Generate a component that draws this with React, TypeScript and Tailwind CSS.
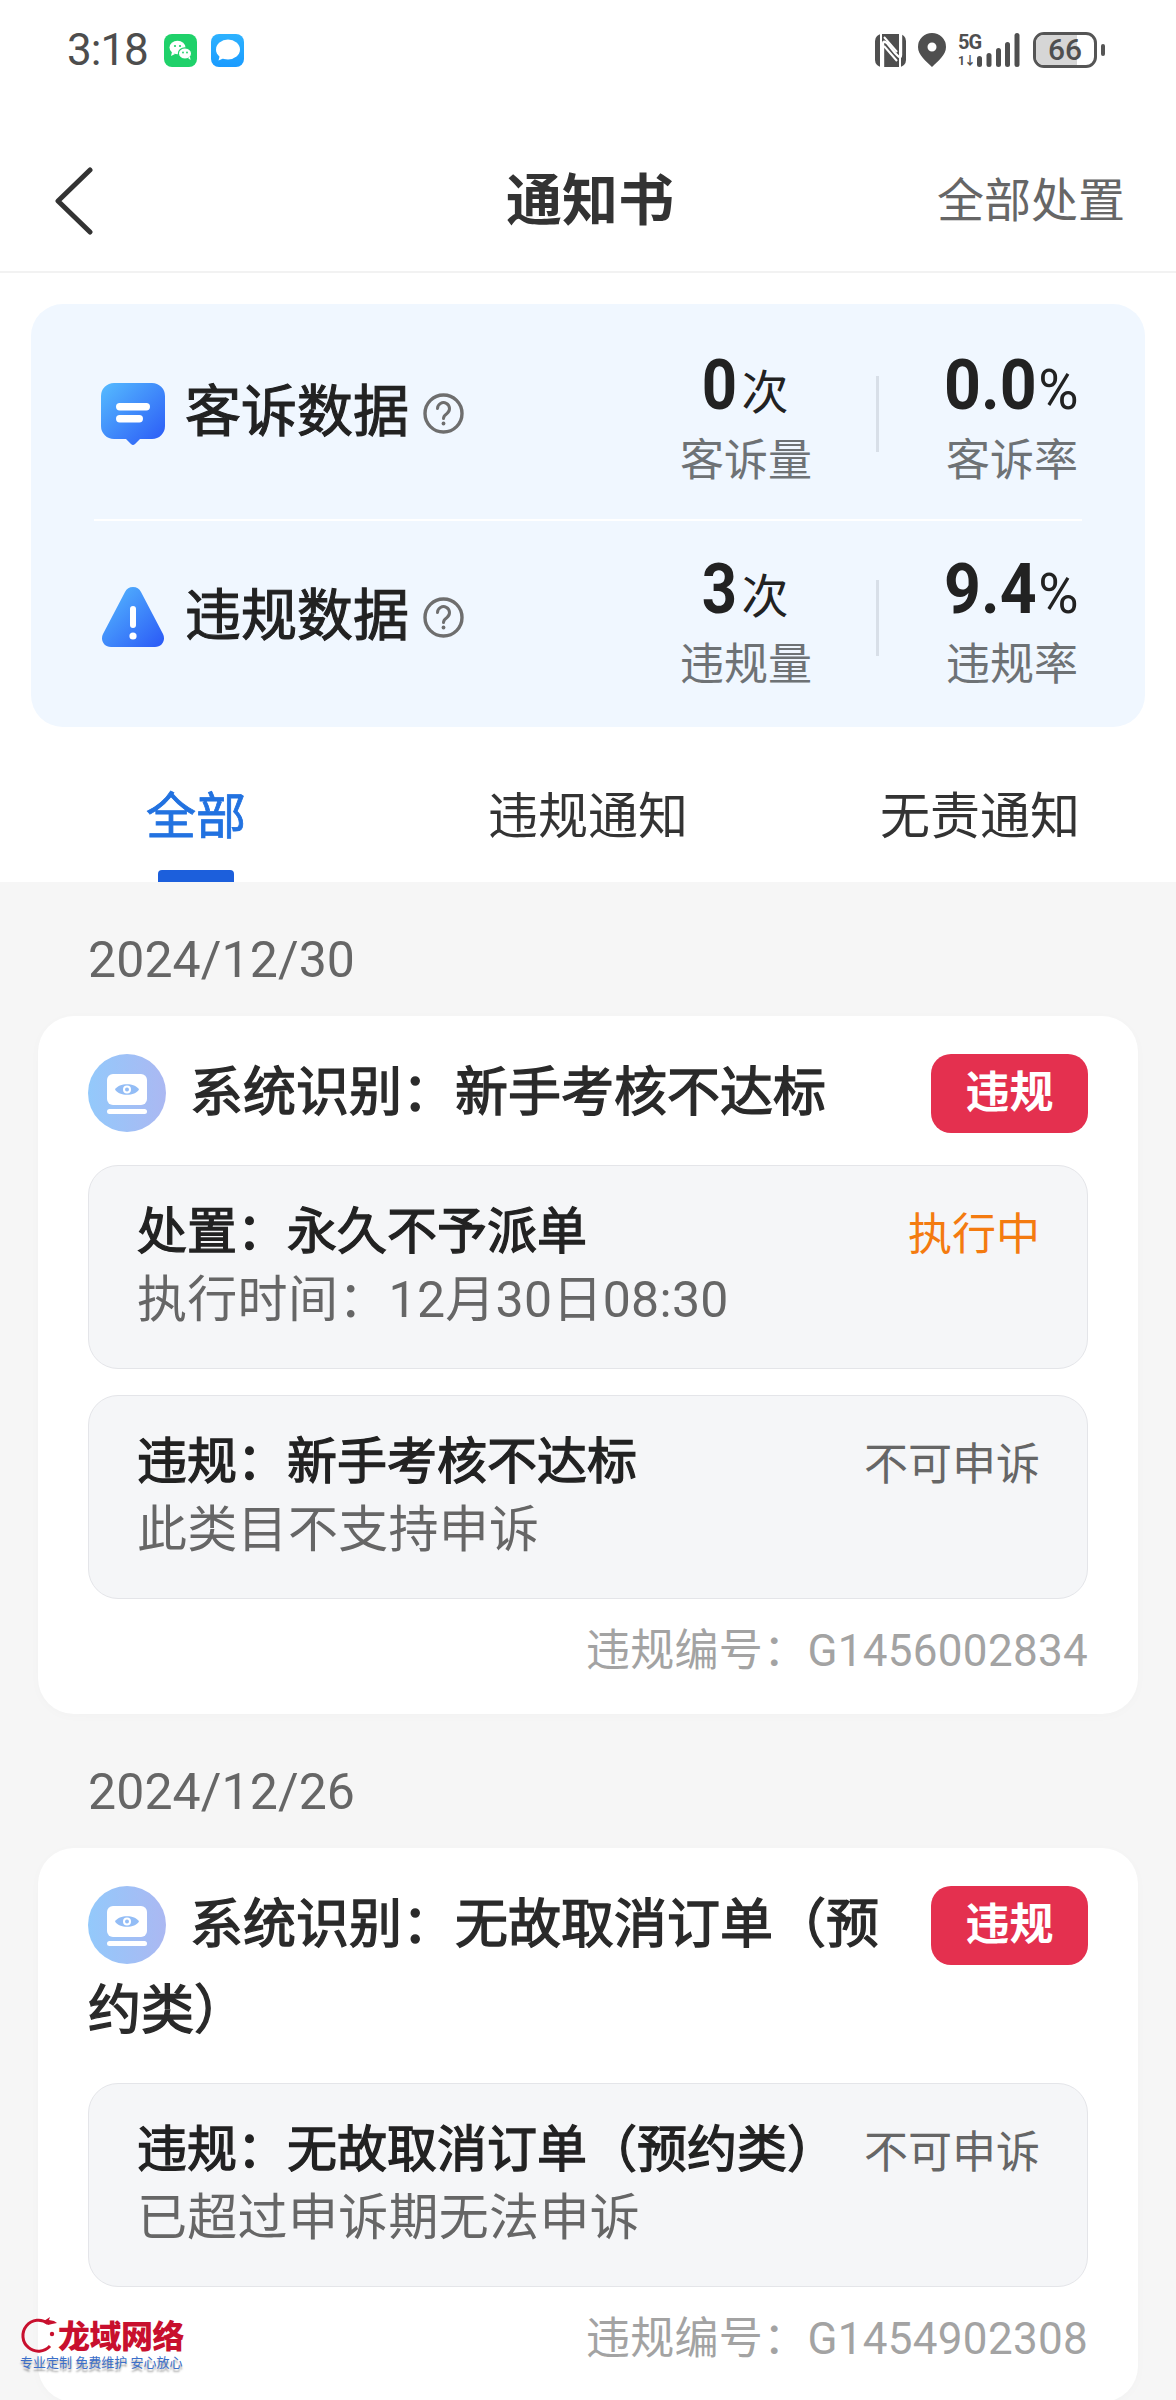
import React from "react";

const sans = "font-['Roboto','Noto_Sans_CJK_SC',sans-serif]";

function StatusBar() {
  return (
    <div className="h-[130px] flex justify-between items-start pt-[31px] pl-[67px] pr-[71px]">
      <div className="flex items-center h-[38px]">
        <span className="text-[44px] leading-[38px] text-[#4d4d4d] w-[97px] inline-block tracking-[-1px]">3:18</span>
        <svg width="33" height="33" viewBox="0 0 33 33">
          <rect width="33" height="33" rx="8" fill="#1fd16a" />
          <ellipse cx="13.5" cy="13.5" rx="8" ry="6.8" fill="#fff" />
          <path d="M8 18l-1 4 4-2z" fill="#fff" />
          <ellipse cx="21" cy="19.5" rx="6.6" ry="5.6" fill="#fff" stroke="#1fd16a" strokeWidth="1.2" />
          <path d="M24 24l2.5 2-.5-3.5z" fill="#fff" />
          <circle cx="11" cy="12" r="1.1" fill="#1fd16a" />
          <circle cx="16" cy="12" r="1.1" fill="#1fd16a" />
          <circle cx="19" cy="18.5" r=".9" fill="#1fd16a" />
          <circle cx="23" cy="18.5" r=".9" fill="#1fd16a" />
        </svg>
        <svg className="ml-[14px]" width="33" height="33" viewBox="0 0 33 33">
          <defs>
            <linearGradient id="msg" x1="0" y1="0" x2="0" y2="1">
              <stop offset="0" stopColor="#2db2ff" />
              <stop offset="1" stopColor="#1a9bff" />
            </linearGradient>
          </defs>
          <rect width="33" height="33" rx="8" fill="url(#msg)" />
          <ellipse cx="17" cy="15.5" rx="12" ry="10" fill="#fff" />
          <path d="M9 21l-1.5 5.5 7-3z" fill="#fff" />
        </svg>
      </div>
      <div className="flex items-center h-[38px] text-[#4f4f4f]">
        <svg width="31" height="33" viewBox="0 0 31 33">
          <rect x="0" y="0" width="31" height="33" rx="7" fill="#4f4f4f" />
          <path d="M8 33V10q0-4 4-1l8 10 3 3q3 3 3-1V0" fill="none" stroke="#fff" strokeWidth="2.400" />
          <path d="M9 3l13 15M9 12l13 15" fill="none" stroke="#fff" strokeWidth="2" />
          <path d="M6 0v33M25 0v33" stroke="#fff" strokeWidth="2" />
        </svg>
        <svg className="ml-[12px]" width="28" height="34" viewBox="0 0 28 34">
          <path fillRule="evenodd" fill="#4f4f4f" d="M14 0a14 14 0 0 1 14 14c0 8-8 14-14 20C8 28 0 22 0 14A14 14 0 0 1 14 0zm0 9.5a4.5 4.5 0 1 0 0 9 4.5 4.5 0 0 0 0-9z" />
        </svg>
        <div className="relative ml-[12px] w-[62px] h-[34px]">
          <span className="absolute left-0 top-[0px] text-[20px] leading-[18px] font-bold tracking-[-1px]">5G</span>
          <span className="absolute left-0 top-[23px] text-[12px] leading-[11px] font-bold tracking-[-1px]">1↓</span>
          <svg className="absolute left-[19px] top-0" width="43" height="34" viewBox="0 0 43 34">
            <rect x="0" y="23" width="5" height="11" rx="2.5" fill="#4f4f4f" />
            <rect x="9.5" y="20" width="5" height="14" rx="2.5" fill="#4f4f4f" />
            <rect x="19" y="15" width="5" height="19" rx="2.5" fill="#4f4f4f" />
            <rect x="28" y="9" width="5" height="25" rx="2.5" fill="#4f4f4f" />
            <rect x="37.5" y="0" width="5" height="34" rx="2.5" fill="#4f4f4f" />
          </svg>
        </div>
        <div className="relative ml-[13px] w-[64px] h-[36px] rounded-[11px] border-[3px] border-[#555] flex items-center justify-center">
          <div className="absolute left-0 top-0 bottom-0 w-[41px] rounded-l-[8px] bg-[#d6d6d6]" />
          <span className="relative text-[30px] leading-[30px] text-[#4f4f4f] font-medium">66</span>
        </div>
        <div className="ml-[4px] w-[4px] h-[12px] rounded-full bg-[#555]" />
      </div>
    </div>
  );
}

function Header() {
  return (
    <div className="h-[143px] grid grid-cols-[1fr_auto_1fr] items-center pl-[55px] pr-[51px] border-b-2 border-[#f2f2f2]">
      <svg width="38" height="68" viewBox="0 0 38 68">
        <polyline points="35,3 3,34 35,65" fill="none" stroke="#333" strokeWidth="5" strokeLinecap="round" strokeLinejoin="round" />
      </svg>
      <div className="text-[56px] leading-[72px] font-bold text-[#333]">通知书</div>
      <div className="text-[47px] leading-[64px] text-[#666] text-right">全部处置</div>
    </div>
  );
}

function Help() {
  return (
    <svg className="ml-[14px] mt-[2px]" width="41" height="41" viewBox="0 0 41 41">
      <circle cx="20.5" cy="20.5" r="18.5" fill="none" stroke="#6e6e6e" strokeWidth="3.4" />
      <path d="M14.5 15.5a6 6 0 1 1 9.5 5c-2 1.400-3.500 2.300-3.500 5" fill="none" stroke="#6e6e6e" strokeWidth="3" strokeLinecap="round" />
      <circle cx="20.500" cy="30.500" r="1.900" fill="#6e6e6e" />
    </svg>
  );
}

function ChatIcon() {
  return (
    <svg className="mt-[3px]" width="64" height="62" viewBox="0 0 64 62">
      <defs>
        <linearGradient id="chatg" x1="0" y1="0" x2="1" y2="1">
          <stop offset="0" stopColor="#56bcff" />
          <stop offset="1" stopColor="#2a58f6" />
        </linearGradient>
      </defs>
      <path d="M13 0h38a13 13 0 0 1 13 13v30a13 13 0 0 1-13 13H39l-5 5a3 3 0 0 1-4 0l-5-5H13A13 13 0 0 1 0 43V13A13 13 0 0 1 13 0z" fill="url(#chatg)" />
      <rect x="15" y="20" width="34" height="7.500" rx="3.700" fill="#fff" />
      <rect x="15" y="32" width="27" height="7.500" rx="3.700" fill="#fff" />
    </svg>
  );
}

function WarnIcon() {
  return (
    <svg className="mt-[2px]" width="64" height="60" viewBox="0 0 64 60">
      <defs>
        <linearGradient id="warng" x1="0" y1="0" x2="1" y2="1">
          <stop offset="0" stopColor="#56bcff" />
          <stop offset="1" stopColor="#2a58f6" />
        </linearGradient>
      </defs>
      <path d="M24 5a9 9 0 0 1 16 0l22 42c3 6-1 13-8 13H10C3 60-1 53 2 47z" fill="url(#warng)" />
      <rect x="29" y="19" width="6" height="22" rx="3" fill="#fff" />
      <circle cx="32" cy="49" r="3.600" fill="#fff" />
    </svg>
  );
}

function Num({ value, unit, pct }: { value: string; unit: string; pct?: boolean }) {
  return (
    <div className="h-[76px] flex items-baseline justify-center leading-[76px]">
      <span className={`inline-block text-[70px] font-bold text-[#222] origin-right ${pct ? "scale-x-[.92] -ml-[10px]" : "scale-x-[.88] -ml-[6px]"}`}>{value}</span>
      <span className={pct ? "text-[55px] text-[#222] ml-[2px]" : "text-[47px] text-[#222] ml-[4px]"}>{unit}</span>
    </div>
  );
}

function StatRow({
  icon,
  name,
  v1,
  l1,
  v2,
  l2,
  top,
}: {
  icon: React.ReactNode;
  name: string;
  v1: string;
  l1: string;
  v2: string;
  l2: string;
  top: string;
}) {
  return (
    <div className={`flex pl-[70px] ${top}`}>
      <div className="flex-1 flex items-center mb-[22px]">
        <div className="w-[64px] flex justify-center">{icon}</div>
        <span className="ml-[20px] text-[56px] leading-[72px] text-[#222] [-webkit-text-stroke:1.100px_#222]">{name}</span>
        <Help />
      </div>
      <div className="w-[260px]">
        <Num value={v1} unit="次" />
        <div className="h-[76px] text-[44px] leading-[76px] text-[#6e7275] text-center">{l1}</div>
      </div>
      <div className="w-[3px] h-[76px] mt-[29px] bg-[#d8dfe8]" />
      <div className="w-[266px]">
        <Num value={v2} unit="%" pct />
        <div className="h-[76px] text-[44px] leading-[76px] text-[#6e7275] text-center">{l2}</div>
      </div>
    </div>
  );
}

function Stats() {
  return (
    <div className="mx-[31px] mt-[31px] h-[423px] rounded-[32px] bg-[#f0f7ff]">
      <StatRow icon={<ChatIcon />} name="客诉数据" v1="0" l1="客诉量" v2="0.0" l2="客诉率" top="pt-[43px] pb-[20px]" />
      <div className="mx-[63px] h-[2px] bg-white" />
      <StatRow icon={<WarnIcon />} name="违规数据" v1="3" l1="违规量" v2="9.4" l2="违规率" top="pt-[30px]" />
    </div>
  );
}

function Tabs() {
  const tabs = ["全部", "违规通知", "无责通知"];
  return (
    <div className="grid grid-cols-3 h-[155px]">
      {tabs.map((t, i) => (
        <div key={t} className="flex flex-col items-center justify-end">
          <div className={`text-[50px] leading-[68px] mb-[19px] ${i === 0 ? "text-[#2272e0] [-webkit-text-stroke:0.8px_#2272e0]" : "text-[#333]"}`}>{t}</div>
          <div className={`w-[76px] h-[12px] rounded-t-[4px] ${i === 0 ? "bg-[#1c5fdc]" : "bg-transparent"}`} />
        </div>
      ))}
    </div>
  );
}

function EyeIcon({ id }: { id: string }) {
  return (
    <svg className="inline-block align-top mt-[4px] mr-[24px]" width="78" height="78" viewBox="0 0 78 78">
      <defs>
        <linearGradient id={id} x1="0" y1="0" x2="1" y2="0">
          <stop offset="0" stopColor="#93c9fb" />
          <stop offset="1" stopColor="#abb8f2" />
        </linearGradient>
      </defs>
      <circle cx="39" cy="39" r="39" fill={`url(#${id})`} />
      <rect x="19" y="20" width="40" height="31" rx="6" fill="#fff" />
      <rect x="19" y="55" width="40" height="5" rx="2.500" fill="#fff" />
      <path d="M27 35.500C31 28.500 47 28.500 51 35.500 47 42.500 31 42.500 27 35.500z" fill="#93bdf6" />
      <circle cx="39" cy="35.500" r="4" fill="#fff" />
      <circle cx="39" cy="35.500" r="2" fill="#93bdf6" />
    </svg>
  );
}

function InfoBox({
  title,
  sub,
  status,
  tone,
  last,
}: {
  title: string;
  sub: string;
  status: string;
  tone: string;
  last?: boolean;
}) {
  return (
    <div className={`flex justify-between h-[204px] rounded-[30px] border border-[#e4e5e9] bg-[#f5f6f8] pl-[48px] pr-[47px] pt-[32px] ${last ? "" : "mb-[26px]"}`}>
      <div>
        <div className="text-[50px] leading-[68px] text-[#222] [-webkit-text-stroke:1.300px_#222]">{title}</div>
        <div className="text-[50px] leading-[68px] text-[#666] tracking-[0.3px]">{sub}</div>
      </div>
      <div className={`text-[44px] leading-[68px] mt-[3px] shrink-0 ${tone}`}>{status}</div>
    </div>
  );
}

function Card({ title, code, children }: { title: string; code: string; children: React.ReactNode }) {
  const id = `eye${code}`;
  return (
    <div className="mx-[38px] rounded-[36px] bg-white px-[50px] pt-[34px] pb-[33px] shadow-[0_2px_12px_rgba(0,0,0,0.02)]">
      <div className="mb-[29px] text-[53px] leading-[86px] text-[#2a2a2a] [-webkit-text-stroke:1.400px_#2a2a2a]">
        <div className="float-right ml-[8px] mt-[4px] w-[157px] h-[79px] rounded-[20px] bg-[#e4304f] text-white text-[44px] leading-[79px] font-bold text-center [-webkit-text-stroke:0]">违规</div>
        <EyeIcon id={id} />
        {title}
      </div>
      {children}
      <div className="mt-[22px] text-[44px] leading-[60px] text-[#a3a3a3] text-right tracking-[0.3px]">{"违规编号\uFF1A" + code}</div>
    </div>
  );
}

function DateLabel({ children }: { children: React.ReactNode }) {
  return <div className="pl-[88px] pt-[44px] pb-[22px] text-[50px] leading-[68px] text-[#666] tracking-[0.1px]">{children}</div>;
}

function Watermark() {
  return (
    <div className="absolute left-[20px] top-[2314px] w-[170px] h-[60px]">
      <svg className="absolute left-[0px] top-[0px]" width="40" height="40" viewBox="0 0 40 40">
        <path d="M28 9.500A15.500 15.500 0 1 0 30 32" fill="none" stroke="#c8102e" strokeWidth="3" />
        <path d="M24 7l6-4-1 3 5 1 3 2-5 1-4 1z" fill="#c8102e" />
        <circle cx="32" cy="20" r="2.200" fill="#c8102e" />
      </svg>
      <div className="absolute left-[38px] top-[4px] text-[32px] leading-[38px] font-black text-[#c8102e] tracking-[-0.500px] whitespace-nowrap">龙域网络</div>
      <div className="absolute left-0 top-[41px] text-[13px] leading-[16px] text-[#3b6fc9] whitespace-nowrap [text-shadow:0_3px_2px_#9a9a9a]">专业定制 免费维护 安心放心</div>
    </div>
  );
}

export default function App() {
  return (
    <div className={`relative w-[1176px] h-[2400px] overflow-hidden bg-white ${sans}`}>
      <StatusBar />
      <Header />
      <Stats />
      <Tabs />
      <div className="bg-[#f6f6f6] h-[1600px]">
        <DateLabel>2024/12/30</DateLabel>
        <Card title={"系统识别\uFF1A新手考核不达标"} code="G1456002834">
          <InfoBox title={"处置\uFF1A永久不予派单"} sub={"执行时间\uFF1A12月30日08:30"} status="执行中" tone="text-[#f47b10]" />
          <InfoBox title={"违规\uFF1A新手考核不达标"} sub="此类目不支持申诉" status="不可申诉" tone="text-[#666]" last />
        </Card>
        <DateLabel>2024/12/26</DateLabel>
        <Card title={"系统识别\uFF1A无故取消订单\uFF08预约类\uFF09"} code="G1454902308">
          <InfoBox title={"违规\uFF1A无故取消订单\uFF08预约类\uFF09"} sub="已超过申诉期无法申诉" status="不可申诉" tone="text-[#666]" last />
        </Card>
      </div>
      <Watermark />
    </div>
  );
}
